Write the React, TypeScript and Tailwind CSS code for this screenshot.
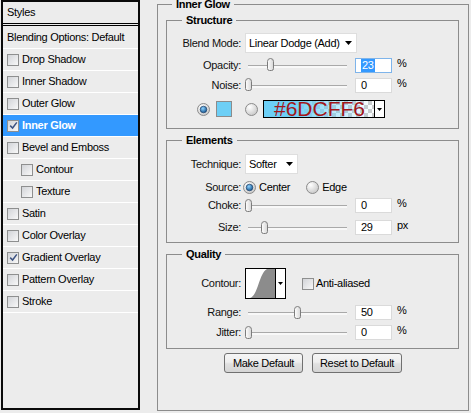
import { useId } from "react";

const layers = [
  { name: "Drop Shadow" },
  { name: "Inner Shadow" },
  { name: "Outer Glow" },
  { name: "Inner Glow", checked: true, active: true },
  { name: "Bevel and Emboss" },
  { name: "Contour", indent: true },
  { name: "Texture", indent: true },
  { name: "Satin" },
  { name: "Color Overlay" },
  { name: "Gradient Overlay", checked: true },
  { name: "Pattern Overlay" },
  { name: "Stroke" },
];

function Check({ checked }: { checked?: boolean }) {
  return (
    <span className="flex h-[12px] w-[12px] shrink-0 items-center justify-center border border-[#8e8f8f] bg-[linear-gradient(135deg,#d2d4d8,#f8f8f8)]">
      {checked && (
        <svg width="9" height="9" viewBox="0 0 9 9">
          <path d="M1.2 4.6 L3.6 7 L7.8 1.4" fill="none" stroke="#3d5382" strokeWidth="1.5" />
        </svg>
      )}
    </span>
  );
}

function Radio({ on }: { on?: boolean }) {
  const id = useId().replace(/[^a-zA-Z0-9]/g, "");
  return (
    <svg width="13" height="13" viewBox="0 0 13 13" className="shrink-0">
      <defs>
        <radialGradient id={id + "b"} cx="0.35" cy="0.3" r="0.8">
          <stop offset="0" stopColor="#ffffff" />
          <stop offset="1" stopColor="#c4c4c4" />
        </radialGradient>
        <radialGradient id={id + "d"} cx="0.4" cy="0.35" r="0.7">
          <stop offset="0" stopColor="#8fd3ff" />
          <stop offset="1" stopColor="#0d4f8c" />
        </radialGradient>
      </defs>
      <circle cx="6.5" cy="6.5" r="6" fill={`url(#${id}b)`} stroke="#8b8b8b" />
      {on && <circle cx="6.5" cy="6.5" r="3.3" fill={`url(#${id}d)`} stroke="#1f426a" strokeWidth="0.7" />}
    </svg>
  );
}

function Arrow({ w = 7, h = 4 }: { w?: number; h?: number }) {
  return (
    <svg width={w} height={h} viewBox={`0 0 ${w} ${h}`} className="shrink-0">
      <path d={`M0 0 H${w} L${w / 2} ${h} Z`} fill="#000" />
    </svg>
  );
}

function Label({ children }: { children: React.ReactNode }) {
  return <span className="w-[74px] shrink-0 text-right text-[#111]">{children}</span>;
}

function Legend({ children, outer }: { children: React.ReactNode; outer?: boolean }) {
  return (
    <legend className={`${outer ? "ml-[14px]" : "ml-[15px]"} px-[4px] text-[11px] leading-[14px] font-bold`}>
      {children}
    </legend>
  );
}

function Slider({ pct }: { pct: number }) {
  return (
    <div className="relative ml-[3px] flex h-full w-[107px] shrink-0 items-center px-[4px]">
      <div className="mt-[3px] h-[3px] w-full border-t border-[#a9a9a9] bg-[#f8f8f8]" />
      <svg
        width="7"
        height="13"
        viewBox="0 0 7 13"
        className="absolute top-[3px]"
        style={{ left: 4 + pct * 99 - 3.5 }}
      >
        <defs>
          <linearGradient id="thumb" x1="0" y1="0" x2="1" y2="0">
            <stop offset="0" stopColor="#ffffff" />
            <stop offset="1" stopColor="#d6d6d6" />
          </linearGradient>
        </defs>
        <path
          d="M0.5 3.5 Q0.5 0.5 3.5 0.5 Q6.5 0.5 6.5 3.5 V10.5 Q6.5 12.5 4.5 12.5 H2.5 Q0.5 12.5 0.5 10.5 Z"
          fill="url(#thumb)"
          stroke="#7c7c7c"
        />
      </svg>
    </div>
  );
}

function NumBox({ value, focused }: { value: string; focused?: boolean }) {
  return (
    <div
      className={`ml-[4px] flex h-[15px] w-[37px] shrink-0 items-center border bg-white pl-[5px] ${
        focused ? "border-[#7eb4ea]" : "border-[#dadada]"
      }`}
    >
      {focused ? <span className="bg-[#3399ff] px-[1px] leading-[13px] text-white">{value}</span> : value}
    </div>
  );
}

function SliderRow({
  label,
  pct,
  value,
  unit,
  focused,
  className = "",
}: {
  label: string;
  pct: number;
  value: string;
  unit: string;
  focused?: boolean;
  className?: string;
}) {
  return (
    <div className={`flex items-center ${className}`}>
      <Label>{label}</Label>
      <Slider pct={pct} />
      <NumBox value={value} focused={focused} />
      <span className="ml-[5px] -mt-[3px]">{unit}</span>
    </div>
  );
}

function Select({ text, width }: { text: string; width: string }) {
  return (
    <div className={`ml-[4px] flex h-[20px] shrink-0 items-center justify-between border border-[#dedede] bg-white pl-[3px] pr-[4px] ${width}`}>
      <span>{text}</span>
      <Arrow />
    </div>
  );
}

function Button({ children, width }: { children: React.ReactNode; width: string }) {
  return (
    <button
      className={`h-[20px] ${width} rounded-[3px] border border-[#707070] bg-[linear-gradient(#f6f6f6,#eeeeee_45%,#e0e0e0_55%,#d5d5d5)] text-[11px] leading-[13px] text-black`}
    >
      {children}
    </button>
  );
}

function StylesList() {
  return (
    <div className="ml-[1px] flex h-[410px] w-[139px] shrink-0 flex-col border-2 border-[#0a0a0a]">
      <div className="flex h-[24px] items-center border-b-[3px] border-double border-black pl-[4px]">Styles</div>
      <div className="flex h-[23px] items-center border-b border-white pl-[4px]">Blending Options: Default</div>
      {layers.map((l) => (
        <div
          key={l.name}
          className={`flex h-[22px] items-center border-b border-white ${l.indent ? "pl-[18px]" : "pl-[4px]"} ${
            l.active ? "bg-[#3399ff] font-bold text-white" : ""
          }`}
        >
          <Check checked={l.checked} />
          <span className="ml-[3px]">{l.name}</span>
        </div>
      ))}
    </div>
  );
}

export default function App() {
  return (
    <div className="flex h-[413px] w-[471px] items-start overflow-hidden bg-[#ececec] font-['Liberation_Sans',Arial,sans-serif] text-[11px] leading-[13px] tracking-[-0.3px] text-black">
      <StylesList />

      <fieldset className="-mt-[3px] ml-[17px] h-[414px] w-[312px] shrink-0 border border-[#8c8c8c]">
        <Legend outer>Inner Glow</Legend>

        <fieldset className="ml-[8px] mt-[2px] w-[293px] border border-[#8c8c8c] pb-[7px] pt-[6px]">
          <Legend>Structure</Legend>
          <div className="flex h-[20px] items-center">
            <Label>Blend Mode:</Label>
            <Select text="Linear Dodge (Add)" width="w-[112px]" />
          </div>
          <SliderRow label="Opacity:" pct={0.23} value="23" unit="%" focused className="mt-[2px] h-[20px]" />
          <SliderRow label="Noise:" pct={0} value="0" unit="%" className="h-[20px]" />
          <div className="mt-[2px] flex h-[24px] items-center pl-[30px]">
            <Radio on />
            <span className="ml-[6px] h-[16px] w-[16px] shrink-0 border border-[#8c8c8c] bg-[#6dcff6]" />
            <span className="ml-[13px]">
              <Radio />
            </span>
            <div className="relative ml-[5px] flex h-[18px] w-[122px] shrink-0 border border-black">
              <svg width="110" height="16" viewBox="0 0 110 16" className="shrink-0">
                <defs>
                  <pattern id="ck" width="8" height="8" patternUnits="userSpaceOnUse">
                    <rect width="8" height="8" fill="#ffffff" />
                    <rect width="4" height="4" fill="#cccccc" />
                    <rect x="4" y="4" width="4" height="4" fill="#cccccc" />
                  </pattern>
                  <linearGradient id="gr" x1="0" y1="0" x2="1" y2="0">
                    <stop offset="0" stopColor="#6dcff6" />
                    <stop offset="0.25" stopColor="#6dcff6" />
                    <stop offset="1" stopColor="#6dcff6" stopOpacity="0" />
                  </linearGradient>
                </defs>
                <rect width="110" height="16" fill="url(#ck)" />
                <rect width="110" height="16" fill="url(#gr)" />
              </svg>
              <div className="flex flex-1 items-center justify-center border-l border-black bg-white">
                <Arrow w={5} h={3} />
              </div>
              <span className="absolute left-[10px] top-[-3px] text-[21px] leading-none tracking-normal text-[#a3161a]">
                #6DCFF6
              </span>
            </div>
          </div>
        </fieldset>

        <fieldset className="ml-[8px] mt-[4px] w-[293px] border border-[#8c8c8c] pb-[6px] pt-[7px]">
          <Legend>Elements</Legend>
          <div className="flex h-[20px] items-center">
            <Label>Technique:</Label>
            <Select text="Softer" width="w-[53px]" />
          </div>
          <div className="mt-[4px] flex h-[18px] items-center">
            <Label>Source:</Label>
            <span className="ml-[2px]">
              <Radio on />
            </span>
            <span className="ml-[3px]">Center</span>
            <span className="ml-[16px]">
              <Radio />
            </span>
            <span className="ml-[3px]">Edge</span>
          </div>
          <SliderRow label="Choke:" pct={0} value="0" unit="%" className="h-[18px]" />
          <SliderRow label="Size:" pct={0.17} value="29" unit="px" className="mt-[4px] h-[18px]" />
        </fieldset>

        <fieldset className="ml-[8px] mt-[4px] w-[293px] border border-[#8c8c8c] pb-[7px] pt-[7px]">
          <Legend>Quality</Legend>
          <div className="flex h-[31px] items-center">
            <Label>Contour:</Label>
            <div className="ml-[4px] flex h-[31px] w-[41px] shrink-0 border border-black bg-white">
              <svg width="29" height="29" viewBox="0 0 29 29" className="shrink-0">
                <path d="M4 29 C12 27 13 4 21 0 L29 0 L29 29 Z" fill="#8c8c8c" />
              </svg>
              <div className="flex flex-1 items-center justify-center border-l border-black">
                <Arrow w={5} h={3} />
              </div>
            </div>
            <span className="ml-[16px]">
              <Check />
            </span>
            <span className="ml-[2px]">Anti-aliased</span>
          </div>
          <SliderRow label="Range:" pct={0.5} value="50" unit="%" className="mt-[4px] h-[18px]" />
          <SliderRow label="Jitter:" pct={0} value="0" unit="%" className="mt-[2px] h-[18px]" />
        </fieldset>

        <div className="mt-[4px] flex justify-center gap-[9px]">
          <Button width="w-[79px]">Make Default</Button>
          <Button width="w-[90px]">Reset to Default</Button>
        </div>
      </fieldset>
    </div>
  );
}
